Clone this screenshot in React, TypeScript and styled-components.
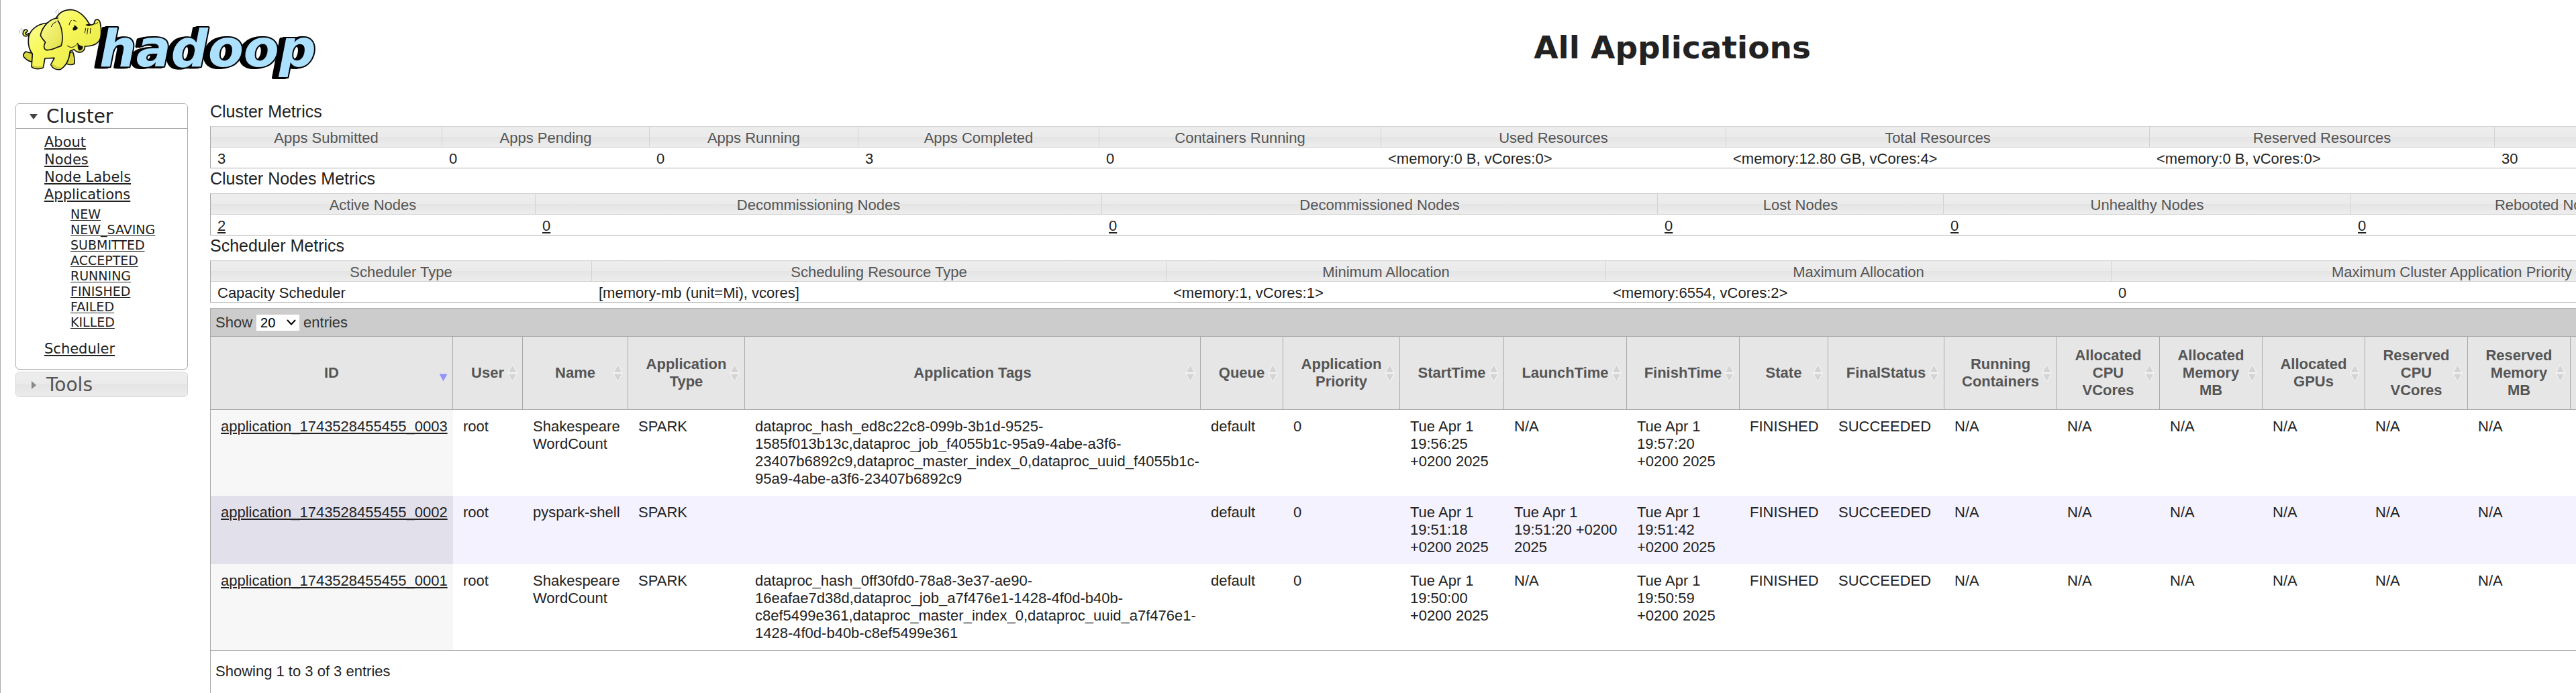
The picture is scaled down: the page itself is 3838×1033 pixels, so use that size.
import React from "react";
import styled, { createGlobalStyle } from "styled-components";

const sans = `"Liberation Sans", Arial, Helvetica, sans-serif`;
const verdana = `"DejaVu Sans", Verdana, sans-serif`;

const GlobalStyle = createGlobalStyle`
  *, *::before, *::after { box-sizing: border-box; }
  body {
    margin: 0;
    background: #fff;
    color: #222;
    font: 22px/26px ${sans};
  }
  a { color: inherit; text-decoration-thickness: 2px; text-underline-offset: 2px; }
  button { font: inherit; color: inherit; cursor: pointer; }
`;

const Page = styled.div`
  display: grid;
  grid-template-columns: 312px max-content;
  grid-template-rows: auto 1fr;
  min-height: 100vh;
  overflow: hidden;
  border-left: 1px solid #aaa;
`;

const LogoLink = styled.a`
  display: block;

  svg { display: block; overflow: visible; }
`;

const WordMark = styled.text`
  font: italic 700 77px ${verdana};
  fill: #ace0ff;
  stroke: #000;
  stroke-width: 4px;
  stroke-linejoin: round;
  paint-order: stroke;
`;

const WordShadow = styled.g`
  filter: drop-shadow(-4px 1px 0 #000) drop-shadow(-4px 0 0 #000);
`;

const TitleBar = styled.header`
  min-height: 151px;
  padding-top: 43px;
`;

const Title = styled.h1`
  margin: 0;
  font: 700 47px/56px ${verdana};
  text-align: center;
`;

const Sidebar = styled.nav`
  display: flex;
  flex-direction: column;
  gap: 3px;
  padding: 3px 33px 0 22px;
  font-family: ${verdana};
`;

const Section = styled.section<{ $open?: boolean }>`
  border: 1px solid ${(p) => (p.$open ? "#aaa" : "#d3d3d3")};
  border-radius: 6px;
  overflow: hidden;
`;

const SectionTitle = styled.h3`
  margin: 0;
  font-size: 28px;
  font-weight: 400;
  line-height: 34px;
`;

const SectionToggle = styled.button<{ $open?: boolean }>`
  display: flex;
  align-items: center;
  gap: 13px;
  width: 100%;
  padding: 2px 0 0 20px;
  border: 0;
  border-bottom: ${(p) => (p.$open ? "1px solid #aaa" : "0")};
  color: ${(p) => (p.$open ? "#222" : "#555")};
  background: ${(p) =>
    p.$open ? "#fff" : "linear-gradient(#ededed 0%, #ebebeb 50%, #e4e4e4 51%, #ececec 100%)"};
  text-align: left;
`;

const Menu = styled.ul`
  margin: 0;
  padding: 7px 0 17px 42px;
  list-style: none;
  font-size: 21px;
  line-height: 26px;
`;

const SubMenu = styled.ul`
  margin: 5px 0 15px;
  padding: 0 0 0 39px;
  list-style: none;
  font-size: 19px;
  line-height: 23px;

  a { text-decoration-thickness: 1px; }
`;

const Content = styled.main`
  display: flex;
  flex-direction: column;
`;

const BlockTitle = styled.h2`
  margin: 0 0 7px;
  font-size: 25px;
  font-weight: 400;
  line-height: 30px;
`;

const MetricsTable = styled.table`
  table-layout: fixed;
  width: 4357px;
  border: 1px solid #aaa;
  border-top-color: #d3d3d3;
  border-spacing: 0;

  th {
    height: 31px;
    padding: 4px 0 0;
    border-right: 1px solid #d3d3d3;
    border-bottom: 1px solid #d3d3d3;
    background: linear-gradient(#ededed 0%, #ebebeb 50%, #e4e4e4 51%, #ededed 100%);
    color: #555;
    font-weight: 400;
    text-align: center;
  }

  td {
    height: 30px;
    padding: 4px 0 0 10px;
  }
`;

const AppsPanel = styled.section`
  flex: 1;
  margin-top: 8px;
  border-left: 1px solid #aaa;
`;

const Toolbar = styled.div`
  padding: 8px 7px;
  border-top: 1px solid #aaa;
  background: #ccc;
  color: #333;
`;

const LengthLabel = styled.label`
  display: flex;
  align-items: center;
  gap: 6px;
  height: 25px;
`;

const SelectBox = styled.span`
  display: grid;
  align-items: center;

  select, svg { grid-area: 1 / 1; }
  svg { justify-self: end; margin-right: 5px; pointer-events: none; }
`;

const LengthSelect = styled.select`
  appearance: none;
  width: 64px;
  height: 24px;
  padding: 0 6px;
  border: 0;
  border-radius: 0;
  background: #fff;
  color: #000;
  font: 20px/24px ${sans};
`;

const AppsTable = styled.table`
  table-layout: fixed;
  width: 4356px;
  border-spacing: 0;
  border-bottom: 1px solid #aaa;

  th {
    position: relative;
    height: 110px;
    padding: 0;
    border: solid #aaa;
    border-width: 1px 1px 1px 0;
    background: #e6e6e6;
    color: #555;
  }

  td {
    padding: 12px 1px 12px 15px;
    vertical-align: top;
  }
`;

const SortButton = styled.button`
  width: 100%;
  padding: 0 20px;
  border: 0;
  background: none;
  font-weight: 700;

  svg { position: absolute; right: 7px; top: 40px; }
`;

const Row = styled.tr<{ $even?: boolean }>`
  background: ${(p) => (p.$even ? "#f4f2ff" : "#fff")};

  td:first-child { background: ${(p) => (p.$even ? "#e2e0eb" : "#f7f7f7")}; }
`;

const Info = styled.p`
  margin: 0;
  padding: 18px 7px 19px;
`;

function Elephant() {
  return (
    <g transform="translate(20 5) scale(.3333)" stroke="#111" strokeWidth="5" strokeLinejoin="round" strokeLinecap="round">
      <path d="M52 216 Q36 228 44 240 Q58 258 82 262 L92 226 Z" fill="#d9d63f" />
      <path d="M246 222 Q240 258 232 268 Q250 280 270 270 Q272 240 262 216 Z" fill="#d9d63f" />
      <path d="M64 144 C42 152 36 140 42 126 C46 116 54 114 60 122 C58 132 52 128 50 134 C52 142 60 138 66 134 Z" fill="#e8e850" />
      <path
        d="M148 88 C100 92 66 122 64 160 C62 190 72 214 82 226 L78 284 C92 296 116 294 130 288 L138 246 L180 244 L164 274 C172 292 190 298 206 296 C230 282 246 256 250 214 L268 206 C274 216 292 222 304 216 C316 208 318 200 316 192 C350 192 384 182 388 144 C390 124 388 100 384 84 C378 68 362 70 360 82 C358 96 346 100 336 92 C318 60 288 28 250 28 C218 30 198 46 188 66 Z"
        fill="url(#hide)"
      />
      <path d="M196 66 C160 66 126 104 118 142 C122 156 132 164 140 174 C132 188 130 200 142 208 C164 214 190 196 210 190 C220 166 218 108 196 78" fill="url(#ear)" />
      <path d="M284 178 C286 194 284 206 292 210 C302 210 308 202 306 192 C296 192 288 186 284 178 Z" fill="#111" strokeWidth="2" />
      <path d="M238 190 C256 202 270 198 284 178" fill="none" strokeWidth="3" />
      <path d="M272 100 Q260 112 264 120 Q278 122 284 110 Q278 102 270 98 Z M322 96 Q332 90 344 96 Q334 106 322 96 Z" fill="#111" strokeWidth="2" />
      <path d="M256 76 Q248 84 246 96 M266 76 Q274 76 278 82 M320 112 L316 132 M330 112 L326 138 M342 112 L340 134 M356 92 Q366 96 374 86 M188 82 Q172 88 166 104" fill="none" strokeWidth="3" />
      <path d="M188 46 Q182 36 194 28 M198 42 Q194 38 200 32 M24 134 Q22 118 36 112 M34 130 Q34 122 40 118" fill="none" stroke="#888" strokeWidth="2" />
      <path d="M82 280 Q106 290 128 282 M168 272 Q186 288 206 290" fill="none" stroke="#c9c63a" strokeWidth="5" />
    </g>
  );
}

function Logo() {
  return (
    <LogoLink href="#" aria-label="Hadoop">
      <svg width="480" height="122" viewBox="0 0 480 122">
        <defs>
          <linearGradient id="hide" x1="0" y1="0" x2="1" y2="1">
            <stop offset="0" stopColor="#fdfdb0" />
            <stop offset=".4" stopColor="#f8f85a" />
            <stop offset="1" stopColor="#e6e445" />
          </linearGradient>
          <linearGradient id="ear" x1="0" y1="0" x2="1" y2="1">
            <stop offset="0" stopColor="#fbfb90" />
            <stop offset="1" stopColor="#e2e048" />
          </linearGradient>
        </defs>
        <WordShadow>
          <WordMark x="147" y="99">hadoop</WordMark>
        </WordShadow>
        <Elephant />
      </svg>
    </LogoLink>
  );
}

function SortArrows({ active }: { active?: boolean }) {
  if (active) {
    return (
      <svg width="13" height="28" viewBox="0 0 13 28" aria-hidden="true">
        <path d="M0 15H13L6.500 27Z" fill="#8f94fa" stroke="#f2f2f8" strokeWidth=".6" />
      </svg>
    );
  }
  return (
    <svg width="15" height="28" viewBox="0 0 15 28" aria-hidden="true">
      <path d="M7.500 1L14 13.500H1ZM1 15H14L7.500 27Z" fill="#d4d4d4" stroke="#f8f8f8" strokeWidth="1" />
    </svg>
  );
}

type Metric = { label: string; value: string; width?: number };

const clusterMetrics: Metric[] = [
  { label: "Apps Submitted", value: "3", width: 345 },
  { label: "Apps Pending", value: "0", width: 309 },
  { label: "Apps Running", value: "0", width: 311 },
  { label: "Apps Completed", value: "3", width: 359 },
  { label: "Containers Running", value: "0", width: 420 },
  { label: "Used Resources", value: "<memory:0 B, vCores:0>", width: 514 },
  { label: "Total Resources", value: "<memory:12.80 GB, vCores:4>", width: 631 },
  { label: "Reserved Resources", value: "<memory:0 B, vCores:0>", width: 514 },
  { label: "", value: "30" },
];

const nodeMetrics: Metric[] = [
  { label: "Active Nodes", value: "2", width: 484 },
  { label: "Decommissioning Nodes", value: "0", width: 844 },
  { label: "Decommissioned Nodes", value: "0", width: 828 },
  { label: "Lost Nodes", value: "0", width: 426 },
  { label: "Unhealthy Nodes", value: "0", width: 607 },
  { label: "Rebooted Nodes", value: "0", width: 594 },
  { label: "", value: "" },
];

const schedulerMetrics: Metric[] = [
  { label: "Scheduler Type", value: "Capacity Scheduler", width: 568 },
  { label: "Scheduling Resource Type", value: "[memory-mb (unit=Mi), vcores]", width: 856 },
  { label: "Minimum Allocation", value: "<memory:1, vCores:1>", width: 655 },
  { label: "Maximum Allocation", value: "<memory:6554, vCores:2>", width: 753 },
  { label: "Maximum Cluster Application Priority", value: "0", width: 1015 },
  { label: "", value: "" },
];

function Metrics({ title, items, linked }: { title: string; items: Metric[]; linked?: boolean }) {
  return (
    <section>
      <BlockTitle>{title}</BlockTitle>
      <MetricsTable>
        <colgroup>
          {items.map((m, i) => (
            <col key={i} style={{ width: m.width }} />
          ))}
        </colgroup>
        <thead>
          <tr>
            {items.map((m, i) => (
              <th key={i} scope="col">{m.label}</th>
            ))}
          </tr>
        </thead>
        <tbody>
          <tr>
            {items.map((m, i) => (
              <td key={i}>{linked && m.value ? <a href="#">{m.value}</a> : m.value}</td>
            ))}
          </tr>
        </tbody>
      </MetricsTable>
    </section>
  );
}

const columns: [string, number?][] = [
  ["ID", 361],
  ["User", 104],
  ["Name", 157],
  ["Application Type", 174],
  ["Application Tags", 679],
  ["Queue", 123],
  ["Application Priority", 174],
  ["StartTime", 155],
  ["LaunchTime", 183],
  ["FinishTime", 168],
  ["State", 132],
  ["FinalStatus", 173],
  ["Running Containers", 168],
  ["Allocated CPU VCores", 153],
  ["Allocated Memory MB", 153],
  ["Allocated GPUs", 153],
  ["Reserved CPU VCores", 153],
  ["Reserved Memory MB", 153],
  [""],
];

const na = ["N/A", "N/A", "N/A", "N/A", "N/A", "N/A"];

const apps: string[][] = [
  [
    "application_1743528455455_0003", "root", "Shakespeare WordCount", "SPARK",
    "dataproc_hash_ed8c22c8-099b-3b1d-9525-1585f013b13c,dataproc_job_f4055b1c-95a9-4abe-a3f6-23407b6892c9,dataproc_master_index_0,dataproc_uuid_f4055b1c-95a9-4abe-a3f6-23407b6892c9",
    "default", "0", "Tue Apr 1 19:56:25 +0200 2025", "N/A", "Tue Apr 1 19:57:20 +0200 2025",
    "FINISHED", "SUCCEEDED", ...na,
  ],
  [
    "application_1743528455455_0002", "root", "pyspark-shell", "SPARK", "",
    "default", "0", "Tue Apr 1 19:51:18 +0200 2025", "Tue Apr 1 19:51:20 +0200 2025", "Tue Apr 1 19:51:42 +0200 2025",
    "FINISHED", "SUCCEEDED", ...na,
  ],
  [
    "application_1743528455455_0001", "root", "Shakespeare WordCount", "SPARK",
    "dataproc_hash_0ff30fd0-78a8-3e37-ae90-16eafae7d38d,dataproc_job_a7f476e1-1428-4f0d-b40b-c8ef5499e361,dataproc_master_index_0,dataproc_uuid_a7f476e1-1428-4f0d-b40b-c8ef5499e361",
    "default", "0", "Tue Apr 1 19:50:00 +0200 2025", "N/A", "Tue Apr 1 19:50:59 +0200 2025",
    "FINISHED", "SUCCEEDED", ...na,
  ],
];

const states = ["NEW", "NEW_SAVING", "SUBMITTED", "ACCEPTED", "RUNNING", "FINISHED", "FAILED", "KILLED"];

export default function App() {
  return (
    <>
      <GlobalStyle />
      <Page>
        <Logo />
        <TitleBar>
          <Title>All Applications</Title>
        </TitleBar>

        <Sidebar>
          <Section $open>
            <SectionTitle>
              <SectionToggle $open aria-expanded="true">
                <svg width="12" height="8" viewBox="0 0 12 8" aria-hidden="true">
                  <path d="M0 0H12L6 8Z" fill="#444" />
                </svg>
                Cluster
              </SectionToggle>
            </SectionTitle>
            <Menu>
              <li><a href="#">About</a></li>
              <li><a href="#">Nodes</a></li>
              <li><a href="#">Node Labels</a></li>
              <li>
                <a href="#">Applications</a>
                <SubMenu>
                  {states.map((s) => (
                    <li key={s}><a href="#">{s}</a></li>
                  ))}
                </SubMenu>
              </li>
              <li><a href="#">Scheduler</a></li>
            </Menu>
          </Section>
          <Section>
            <SectionTitle>
              <SectionToggle aria-expanded="false">
                <svg width="12" height="12" viewBox="0 0 12 12" aria-hidden="true">
                  <path d="M3 0V12L10 6Z" fill="#888" />
                </svg>
                Tools
              </SectionToggle>
            </SectionTitle>
          </Section>
        </Sidebar>

        <Content>
          <Metrics title="Cluster Metrics" items={clusterMetrics} />
          <Metrics title="Cluster Nodes Metrics" items={nodeMetrics} linked />
          <Metrics title="Scheduler Metrics" items={schedulerMetrics} />

          <AppsPanel>
            <Toolbar>
              <LengthLabel>
                Show
                <SelectBox>
                  <LengthSelect defaultValue="20">
                    <option value="20">20</option>
                  </LengthSelect>
                  <svg width="14" height="9" viewBox="0 0 14 9" aria-hidden="true">
                    <path d="M1 1L7 7.500L13 1" fill="none" stroke="#000" strokeWidth="2" />
                  </svg>
                </SelectBox>
                entries
              </LengthLabel>
            </Toolbar>
            <AppsTable>
              <colgroup>
                {columns.map(([, width], i) => (
                  <col key={i} style={{ width }} />
                ))}
              </colgroup>
              <thead>
                <tr>
                  {columns.map(([label], i) => (
                    <th key={i} scope="col" aria-sort={i === 0 ? "descending" : undefined}>
                      {label && (
                        <SortButton>
                          {label}
                          <SortArrows active={i === 0} />
                        </SortButton>
                      )}
                    </th>
                  ))}
                </tr>
              </thead>
              <tbody>
                {apps.map((cells, r) => (
                  <Row key={cells[0]} $even={r % 2 === 1}>
                    {cells.map((c, i) => (
                      <td key={i}>{i === 0 ? <a href="#">{c}</a> : c}</td>
                    ))}
                    <td />
                  </Row>
                ))}
              </tbody>
            </AppsTable>
            <Info>Showing 1 to 3 of 3 entries</Info>
          </AppsPanel>
        </Content>
      </Page>
    </>
  );
}
